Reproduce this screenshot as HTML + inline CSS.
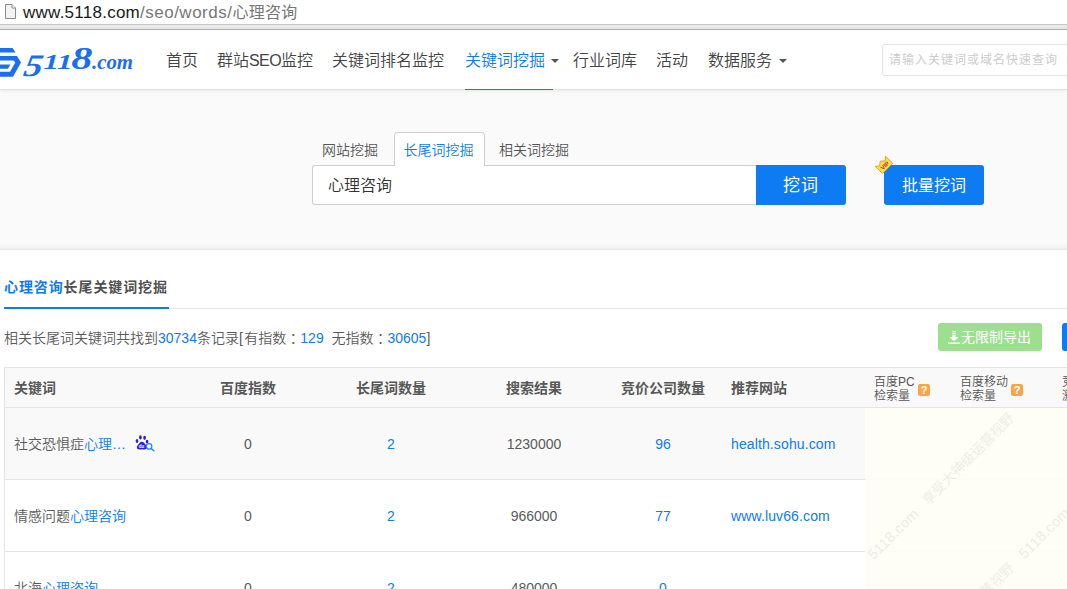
<!DOCTYPE html>
<html lang="zh-CN">
<head>
<meta charset="utf-8">
<title>心理咨询长尾关键词挖掘 - 5118.com</title>
<style>
*{box-sizing:border-box;margin:0;padding:0}
html,body{width:1067px;height:589px;overflow:hidden;background:#fafafa}
body{position:relative;font-family:"Liberation Sans","Noto Sans CJK SC",sans-serif;font-size:14px;color:#555;-webkit-font-smoothing:antialiased}
.abs{position:absolute;white-space:nowrap}
a{color:#0d7bf2;text-decoration:none}
.blue,.td.blue{color:#0d7bf2}

/* browser address bar */
#addr{left:0;top:0;width:1067px;height:24px;background:#fff}
#addr .url{left:23px;top:1px;height:24px;line-height:24px;font-size:17px;color:#1a1a1a;letter-spacing:.25px}
#addr .url span{color:#777;letter-spacing:.5px}
#addr .url span span{font-size:16px;letter-spacing:.3px}
#sep{left:0;top:24px;width:1067px;height:6px;background:linear-gradient(#c6c6c6 0,#c6c6c6 1px,#ededed 1px,#e3e3e3 5px,#b2b2b2 5px,#b2b2b2 6px)}

/* header */
#hdr{left:0;top:30px;width:1067px;height:60px;background:#fff;border-bottom:1px solid #e2e2e2;box-shadow:0 1px 3px rgba(0,0,0,.07)}
.nav{top:31px;height:60px;line-height:60px;font-size:16px;color:#444;font-weight:350}
.nav.on{color:#0d7bf2}
.caret{width:0;height:0;border-left:4px solid transparent;border-right:4px solid transparent;border-top:4px solid #555}
#navline{left:465px;top:89px;width:88px;height:1px;background:#0d7bf2}
#q{left:882px;top:44px;width:200px;height:32px;border:1px solid #e4e4e4;border-radius:3px;background:#fff;font-size:12px;letter-spacing:1px;color:#ccc;line-height:30px;padding-left:6px}

/* search band */
#band{left:0;top:90px;width:1067px;height:160px;background:linear-gradient(#fafafa 0,#fafafa 153px,#f4f4f4 157px,#e9e9e9 159.300px,#ebebeb 160px)}
.tab{top:135px;height:30px;line-height:30px;font-size:14px;color:#555;font-weight:350}
#tabon{left:393.500px;top:132px;width:91.500px;height:34px;font-weight:350;padding-right:1.500px;background:#fff;border:1px solid #cfcfcf;border-bottom:none;border-radius:4px 4px 0 0;color:#0d7bf2;text-align:center;line-height:35px;font-size:14px;z-index:2}
#kw{left:312px;top:165px;width:445px;height:40px;background:#fff;border:1px solid #cfcfcf;border-right:none;border-radius:3px 0 0 3px;font-size:16px;color:#333;font-weight:350;line-height:39.500px;padding-left:15px}
.btn{background:#0d7bf2;color:#fff;text-align:center}
#go{left:756px;top:165px;width:90px;height:40px;border-radius:0 3px 3px 0;font-size:17px;line-height:41px;letter-spacing:1px}
#batch{left:884px;top:165px;width:100px;height:40px;border-radius:3px;font-size:16px;line-height:41px}

/* results */
#main{left:0;top:250px;width:1067px;height:339px;background:#fff}
#ttl{left:4px;top:276px;height:22px;line-height:22px;font-size:14px;font-weight:bold;letter-spacing:.9px;color:#505050}
#ttlrule{left:4px;top:308px;width:1063px;height:1px;background:#e6e6e6}
#ttlbar{left:4px;top:307px;width:165px;height:2px;background:#0d7bf2}
#cnt{left:4px;top:327px;height:22px;line-height:22px;font-size:14px;color:#5a5a5a;font-weight:350}
#cnt i{font-style:normal;position:relative;left:3.500px}
#cnt b{font-weight:inherit;letter-spacing:1.500px}
#exp{left:938px;top:323px;width:104px;height:28px;border-radius:3px;background:#9ce08f;color:#fff;font-size:14px;line-height:28px}
#exp2{left:1062px;top:323px;width:20px;height:28px;border-radius:3px;background:#0d7bf2}

#thead{left:4px;top:367px;width:1063px;height:41px;background:#f9f9f9;border-top:1px solid #e4e4e4;border-bottom:1px solid #e4e4e4;border-left:1px solid #e4e4e4}
.th{top:378px;height:20px;line-height:20px;font-size:14px;font-weight:bold;color:#585858}
.th2{font-size:12px;line-height:14.500px;color:#555;top:374.500px;font-weight:350}
.qm{width:12px;height:12px;border-radius:2px;background:#fca548;color:#fff;font-size:11px;font-weight:bold;line-height:12px;text-align:center}
.row{left:4px;width:1063px;height:72px;border-bottom:1px solid #e4e4e4;border-left:1px solid #e4e4e4;background:#fff}
.row.odd{background:#f9f9f9}
.td{height:22px;line-height:22px;font-size:14px;color:#5a5a5a;font-weight:350}
.td.lk{letter-spacing:.12px}
.c{text-align:center;width:80px}
#wm{left:865px;top:408px;width:202px;height:181px;background:rgba(255,254,245,.93);overflow:hidden}
.w{position:absolute;white-space:nowrap;font-size:13.700px;color:#ecece7;transform-origin:0 100%;transform:rotate(-45deg);line-height:14px;font-weight:350}
.w.l{font-size:14.500px;letter-spacing:.3px}
</style>
</head>
<body>
<!-- address bar -->
<div class="abs" id="addr">
  <svg class="abs" style="left:4px;top:4px" width="13" height="16" viewBox="0 0 13 16"><path d="M1.5 .5h6.5l3.5 3.5v10.5h-10z" fill="#f4f4f4" stroke="#8a8a8a"/><path d="M8 .5v3.5h3.5" fill="#fff" stroke="#8a8a8a"/></svg>
  <div class="abs url">www.5118.com<span>/seo/words/<span>心理咨询</span></span></div>
</div>
<div class="abs" id="sep"></div>

<!-- header -->
<div class="abs" id="band"></div>
<div class="abs" id="hdr"></div>
<svg class="abs" id="logo" style="left:0;top:40px" width="140" height="45" viewBox="0 40 140 45">
<g fill="#1a6ef0">
<path d="M0 48h12.500l3.100 4.600h-15.600z"/>
<path d="M0 56h17l4 6.500l-8 14.200h-13v-5h10l5.300-9.200l-1.800-1.900h-13.500z"/>
<path d="M0 64.500h10.300l-2.300 4.200h-8z"/>
</g>
<g fill="#1a6ef0" font-family="Liberation Serif,serif" font-style="italic" font-weight="bold">
<text transform="translate(22.500 75.600) scale(1.200 1) skewX(-8)" font-size="31.500">5</text>
<text transform="translate(43.500 68.700) scale(1.450 1)" font-size="21.500">1</text>
<text transform="translate(57 68.700) scale(1.450 1)" font-size="21.500">1</text>
<text transform="translate(71.200 68.900) scale(1.300 1)" font-size="32.500">8</text>
<text transform="translate(92 68.700)" font-size="21.500" textLength="41" lengthAdjust="spacingAndGlyphs">.com</text>
</g>
</svg>
<div class="abs nav" style="left:166px">首页</div>
<div class="abs nav" style="left:217px">群站<span style="letter-spacing:-.6px">SEO</span>监控</div>
<div class="abs nav" style="left:332px">关键词排名监控</div>
<div class="abs nav on" style="left:465px">关键词挖掘</div>
<div class="abs caret" style="left:551px;top:59px"></div>
<div class="abs nav" style="left:573px">行业词库</div>
<div class="abs nav" style="left:656px">活动</div>
<div class="abs nav" style="left:708px">数据服务</div>
<div class="abs caret" style="left:779px;top:59px"></div>
<div class="abs" id="navline"></div>
<div class="abs" id="q">请输入关键词或域名快速查询</div>

<!-- search band -->
<div class="abs tab" style="left:322px">网站挖掘</div>
<div class="abs" id="tabon">长尾词挖掘</div>
<div class="abs tab" style="left:499px">相关词挖掘</div>
<div class="abs" id="kw">心理咨询</div>
<div class="abs btn" id="go">挖词</div>
<div class="abs btn" id="batch">批量挖词</div>
<svg class="abs" style="left:870px;top:150px" width="28" height="28" viewBox="0 0 28 28"><path d="M5.200 16.400l4.500-.7l.5-4.500l5-.4l.2-4.600l7.400 7.100l-10.200 10.200z" fill="#f9e045" stroke="#e59a1e" stroke-width=".9" stroke-linejoin="round"/><text transform="translate(14.900 15.600) rotate(-45)" font-size="5.800" font-weight="bold" fill="#d8243c" text-anchor="middle" font-family="Liberation Sans,sans-serif" y="2">VIP</text></svg>

<!-- results -->
<div class="abs" id="main"></div>
<div class="abs" id="ttl"><span class="blue">心理咨询</span>长尾关键词挖掘</div>
<div class="abs" id="ttlrule"></div>
<div class="abs" id="ttlbar"></div>
<div class="abs" id="cnt">相关长尾词关键词共找到<span class="blue">30734</span>条记录<b>[</b>有指数<i>：</i><span class="blue">129</span>&nbsp; 无指数<i>：</i><span class="blue">30605</span>]</div>
<div class="abs" id="exp"><svg class="abs" style="left:10px;top:8px" width="12" height="13" viewBox="0 0 12 13"><path d="M4.3 0h3.400v1.200h-3.400zM4.300 2h3.400v1.200h-3.400zM4.300 4h3.400v2h2.900l-4.600 4.300l-4.600-4.300h2.900zM0 11.400h12v1.600h-12z" fill="#fff"/></svg><span class="abs" style="left:23px;top:0">无限制导出</span></div>
<div class="abs" id="exp2"></div>

<div class="abs" id="thead"></div>
<div class="abs th" style="left:14px">关键词</div>
<div class="abs th c" style="left:208px">百度指数</div>
<div class="abs th c" style="left:351px">长尾词数量</div>
<div class="abs th c" style="left:494px">搜索结果</div>
<div class="abs th c" style="left:613px;width:100px">竞价公司数量</div>
<div class="abs th" style="left:731px">推荐网站</div>
<div class="abs th2" style="left:874px">百度PC<br>检索量</div>
<div class="abs qm" style="left:918px;top:384px">?</div>
<div class="abs th2" style="left:960px">百度移动<br>检索量</div>
<div class="abs qm" style="left:1011px;top:384px">?</div>
<div class="abs th2" style="left:1062px">竞价<br>激烈</div>

<div class="abs row odd" style="top:408px"></div>
<div class="abs row" style="top:480px"></div>
<div class="abs row" style="top:552px"></div>

<div class="abs td" style="left:14px;top:433px">社交恐惧症<span class="blue">心理…</span></div>
<svg class="abs" style="left:135px;top:434px" width="21" height="18" viewBox="0 0 21 18"><g fill="#2a22dd"><ellipse cx="2" cy="7.100" rx="1.350" ry="2"/><ellipse cx="5.400" cy="3.400" rx="1.400" ry="2.100"/><ellipse cx="9.600" cy="3.800" rx="1.400" ry="2.100"/><ellipse cx="12.100" cy="7.600" rx="1.300" ry="1.900"/><path d="M6.900 7.800c1.700 0 2.600 1.700 3.900 3.100c1.300 1.400 1.600 3.300 .2 4.200c-1.400 .8-2.800 .1-4.100 .1s-2.900 .7-4.200-.2c-1.300-1-1-2.800 .3-4.100c1.300-1.400 2.200-3.100 3.900-3.100z"/></g><text x="6.600" y="14.400" font-size="4.500" font-weight="bold" fill="#fff" text-anchor="middle" font-family="Liberation Sans,sans-serif">du</text><circle cx="14.100" cy="12.400" r="2.700" fill="#fff" stroke="#1a86f5" stroke-width="1.200"/><path d="M16.200 14.500l2.700 2.300" stroke="#1a86f5" stroke-width="1.500" stroke-linecap="round"/></svg>
<div class="abs td c" style="left:208px;top:433px">0</div>
<div class="abs td c blue" style="left:351px;top:433px">2</div>
<div class="abs td c" style="left:494px;top:433px">1230000</div>
<div class="abs td c blue" style="left:623px;top:433px">96</div>
<div class="abs td blue lk" style="left:731px;top:433px">health.sohu.com</div>

<div class="abs td" style="left:14px;top:505px">情感问题<span class="blue">心理咨询</span></div>
<div class="abs td c" style="left:208px;top:505px">0</div>
<div class="abs td c blue" style="left:351px;top:505px">2</div>
<div class="abs td c" style="left:494px;top:505px">966000</div>
<div class="abs td c blue" style="left:623px;top:505px">77</div>
<div class="abs td blue lk" style="left:731px;top:505px">www.luv66.com</div>

<div class="abs td" style="left:14px;top:576.500px">北海<span class="blue">心理咨询</span></div>
<div class="abs td c" style="left:208px;top:576.500px">0</div>
<div class="abs td c blue" style="left:351px;top:576.500px">2</div>
<div class="abs td c" style="left:494px;top:576.500px">480000</div>
<div class="abs td c blue" style="left:623px;top:576.500px">0</div>

<div class="abs" id="wm">
  <span class="w l" style="left:10px;top:139.500px">5118.com</span>
  <span class="w l" style="left:160.500px;top:139px">5118.com</span>
  <span class="w" style="left:64.500px;top:86px">享受大神级运营视野</span>
  <span class="w" style="left:64.500px;top:236px">享受大神级运营视野</span>
</div>
</body>
</html>
